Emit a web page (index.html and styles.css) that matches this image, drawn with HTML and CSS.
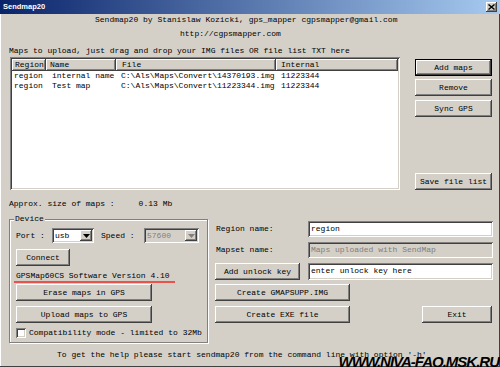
FILE: index.html
```html
<!DOCTYPE html>
<html>
<head>
<meta charset="utf-8">
<title>Sendmap20</title>
<link rel="stylesheet" href="styles.css">
</head>
<body>
<div class="window">
  <div class="titlebar">
    <span class="title">Sendmap20</span>
    <span class="close"><svg width="7" height="6" viewBox="0 0 7 6"><path d="M0.5 0.5L6.5 5.5M6.5 0.5L0.5 5.5" stroke="#000" stroke-width="1.4"/></svg></span>
  </div>
  <div class="content">
    <p class="credits">Sendmap20 by Stanislaw Kozicki, gps_mapper cgpsmapper@gmail.com</p>
    <p class="credits url">http://cgpsmapper.com</p>
    <p class="hint">Maps to upload, just drag and drop your IMG files OR file list TXT here</p>
    <div class="top">
      <div class="listbox">
        <div class="lv-head">
          <span class="h-region">Region</span>
          <span class="h-name">Name</span>
          <span class="h-file">File</span>
          <span class="h-internal">Internal</span>
        </div>
        <div class="lv-row">
          <span class="c-region">region</span>
          <span class="c-name">internal name</span>
          <span class="c-file">C:\Als\Maps\Convert\14370193.img</span>
          <span class="c-internal">11223344</span>
        </div>
        <div class="lv-row">
          <span class="c-region">region</span>
          <span class="c-name">Test map</span>
          <span class="c-file">C:\Als\Maps\Convert\11223344.img</span>
          <span class="c-internal">11223344</span>
        </div>
      </div>
      <div class="side">
        <button class="btn btn-default">Add maps</button>
        <button class="btn btn-remove">Remove</button>
        <button class="btn btn-sync">Sync GPS</button>
        <button class="btn btn-save">Save file list</button>
      </div>
    </div>
    <p class="approx">Approx. size of maps :     0.13 Mb</p>
    <div class="bottom">
      <fieldset class="device">
        <legend>Device</legend>
        <div class="port-row">
          <span class="lbl-port">Port :</span>
          <div class="combo combo-port">
            <span class="combo-text">usb</span>
            <span class="combo-btn"><svg width="7" height="4" viewBox="0 0 7 4"><path d="M0 0H7L3.5 4Z" fill="#000"/></svg></span>
          </div>
          <span class="lbl-speed">Speed :</span>
          <div class="combo combo-speed disabled">
            <span class="combo-text">57600</span>
            <span class="combo-btn"><svg width="7" height="4" viewBox="0 0 7 4"><path d="M0 0H7L3.5 4Z" fill="#808080"/></svg></span>
          </div>
        </div>
        <button class="btn btn-connect">Connect</button>
        <div class="gps-version">GPSMap60CS Software Version 4.10</div>
        <button class="btn btn-wide btn-erase">Erase maps in GPS</button>
        <button class="btn btn-wide btn-upload">Upload maps to GPS</button>
        <label class="check-row"><span class="checkbox"></span><span>Compatibility mode - limited to 32Mb</span></label>
      </fieldset>
      <div class="map-panel">
        <div class="row row-region">
          <span class="lbl">Region name:</span>
          <div class="field">region</div>
        </div>
        <div class="row row-mapset">
          <span class="lbl">Mapset name:</span>
          <div class="field disabled">Maps uploaded with SendMap</div>
        </div>
        <div class="row row-unlock">
          <button class="btn btn-unlock">Add unlock key</button>
          <div class="field field-key">enter unlock key here</div>
        </div>
        <div class="row row-gmap">
          <button class="btn btn-create">Create GMAPSUPP.IMG</button>
        </div>
        <div class="row row-exe">
          <button class="btn btn-create">Create EXE file</button>
          <button class="btn btn-exit">Exit</button>
        </div>
      </div>
    </div>
    <p class="help">To get the help please start sendmap20 from the command line with option '-h'</p>
  </div>
  <div class="watermark">WWW.NIVA-FAQ.MSK.RU</div>
</div>
</body>
</html>
```
FILE: styles.css
```css
* { box-sizing: border-box; }
html, body { margin: 0; padding: 0; }
body {
  width: 500px;
  height: 367px;
  overflow: hidden;
  background: #d4d0c8;
  font-family: "Liberation Mono", "Courier New", monospace;
  font-size: 8px;
  line-height: 10px;
  color: #000;
}
.window {
  position: relative;
  width: 500px;
  height: 367px;
  background: #d4d0c8;
  box-shadow: inset -1px -1px 0 #404040, inset 1px 0 0 #fff;
}
.titlebar {
  height: 14px;
  display: flex;
  align-items: center;
  justify-content: space-between;
  padding: 0 3px 0 3px;
  background: linear-gradient(to right, #0a246a 0%, #a6caf0 100%);
}
.title {
  color: #fff;
  font-family: "Liberation Sans", Arial, sans-serif;
  font-weight: bold;
  font-size: 7.5px;
  line-height: 10px;
}
.close {
  width: 11px;
  height: 10px;
  display: flex;
  align-items: center;
  justify-content: center;
  background: #d4d0c8;
  box-shadow: inset -1px -1px 0 #404040, inset 1px 1px 0 #fff, inset -2px -2px 0 #808080;
}
.close svg { display: block; }
.content { padding: 1px 0 0 9px; }
p { margin: 0; white-space: pre; }
.credits { padding-left: 86px; }
.url { margin-top: 4px; padding-left: 171px; }
.hint { margin-top: 7px; }
.top {
  display: flex;
  margin-top: 1px;
  margin-left: 1px;
  gap: 15px;
}
.listbox {
  width: 390px;
  height: 133px;
  padding: 2px;
  background: #fff;
  box-shadow: inset 1px 1px 0 #808080, inset -1px -1px 0 #fff, inset 2px 2px 0 #404040, inset -2px -2px 0 #d4d0c8;
}
.lv-head, .lv-row {
  display: grid;
  grid-template-columns: 34px 70px 160px 1fr;
  white-space: pre;
}
.lv-head span {
  height: 12px;
  line-height: 12px;
  background: #d4d0c8;
  box-shadow: inset -1px -1px 0 #404040, inset 1px 1px 0 #fff, inset -2px -2px 0 #808080;
}
.h-region { padding-left: 3px; }
.h-name { padding-left: 4px; }
.h-file { padding-left: 6px; }
.h-internal { padding-left: 5px; }
.lv-row span { height: 10px; }
.c-region { padding-left: 2px; }
.c-name { padding-left: 6px; }
.c-file { padding-left: 5px; }
.c-internal { padding-left: 5px; }
.side {
  width: 77px;
  display: flex;
  flex-direction: column;
  padding-top: 2px;
}
.btn {
  display: block;
  height: 17px;
  margin: 0;
  padding: 0;
  border: 0;
  background: #d4d0c8;
  font: inherit;
  line-height: 10px;
  color: #000;
  text-align: center;
  white-space: pre;
  box-shadow: inset -1px -1px 0 #404040, inset 1px 1px 0 #fff, inset -2px -2px 0 #808080;
}
.side .btn { width: 77px; }
.btn-default {
  box-shadow: inset 0 0 0 1px #000, inset -2px -2px 0 #404040, inset 2px 2px 0 #fff, inset -3px -3px 0 #808080;
}
.btn-remove { margin-top: 3px; }
.btn-sync { margin-top: 4px; }
.btn-save { margin-top: auto; }
.approx { margin-top: 9px; }
.bottom {
  display: flex;
  margin-top: 5px;
}
.device {
  margin: 0;
  width: 199px;
  min-inline-size: 0;
  padding: 4px 0 4px 6px;
  border: 1px solid #808080;
  box-shadow: inset 1px 1px 0 #fff, 1px 1px 0 #fff;
}
.device legend {
  margin-left: -2px;
  padding: 0 1px;
  line-height: 10px;
  background: #d4d0c8;
}
.port-row {
  display: flex;
  align-items: center;
  height: 15px;
}
.lbl-port { width: 36px; }
.lbl-speed { width: 43px; margin-left: 7px; }
.combo {
  height: 15px;
  display: flex;
  align-items: center;
  padding: 2px;
  background: #fff;
  box-shadow: inset 1px 1px 0 #808080, inset -1px -1px 0 #fff, inset 2px 2px 0 #404040, inset -2px -2px 0 #d4d0c8;
}
.combo-port { width: 42px; }
.combo-speed { width: 55px; }
.combo-text { flex: 1; padding-left: 1px; }
.combo.disabled { background: #d4d0c8; }
.combo.disabled .combo-text { color: #808080; }
.combo-btn {
  width: 12px;
  height: 11px;
  display: flex;
  align-items: center;
  justify-content: center;
  background: #d4d0c8;
  box-shadow: inset -1px -1px 0 #404040, inset 1px 1px 0 #fff, inset -2px -2px 0 #808080;
}
.combo-btn svg { display: block; }
.btn-connect { width: 54px; margin-top: 6px; }
.gps-version {
  margin-top: 5px;
  margin-left: -2px;
  padding-left: 2px;
  width: 161px;
  white-space: pre;
  border-bottom: 2px solid #e8534e;
}
.btn-wide { width: 136px; }
.btn-erase { margin-top: 1px; }
.btn-upload { margin-top: 5px; }
.check-row {
  display: flex;
  align-items: center;
  margin-top: 5px;
  height: 10px;
  white-space: pre;
}
.checkbox {
  width: 10px;
  height: 10px;
  margin-right: 3px;
  background: #fff;
  box-shadow: inset 1px 1px 0 #808080, inset -1px -1px 0 #fff, inset 2px 2px 0 #404040, inset -2px -2px 0 #d4d0c8;
}
.map-panel {
  margin-left: 7px;
  padding-top: 7px;
  display: flex;
  flex-direction: column;
}
.row { display: flex; align-items: center; }
.row-mapset, .row-unlock, .row-exe { margin-top: 5px; }
.row-gmap { margin-top: 4px; }
.lbl { width: 93px; padding-left: 1px; }
.field {
  width: 185px;
  height: 16px;
  padding: 3px 2px 0 3px;
  white-space: pre;
  background: #fff;
  box-shadow: inset 1px 1px 0 #808080, inset -1px -1px 0 #fff, inset 2px 2px 0 #404040, inset -2px -2px 0 #d4d0c8;
}
.field.disabled { background: #d4d0c8; color: #808080; }
.field-key { height: 17px; margin-left: 8px; }
.btn-unlock { width: 85px; }
.btn-create { width: 135px; }
.btn-exit { width: 70px; margin-left: 72px; }
.help { margin-top: 7px; padding-left: 48px; }
.watermark {
  position: absolute;
  right: 1px;
  bottom: -2px;
  font-family: "Liberation Sans", Arial, sans-serif;
  font-style: italic;
  font-weight: bold;
  font-size: 15px;
  line-height: 15px;
  letter-spacing: -1px;
  color: #000;
}
```
